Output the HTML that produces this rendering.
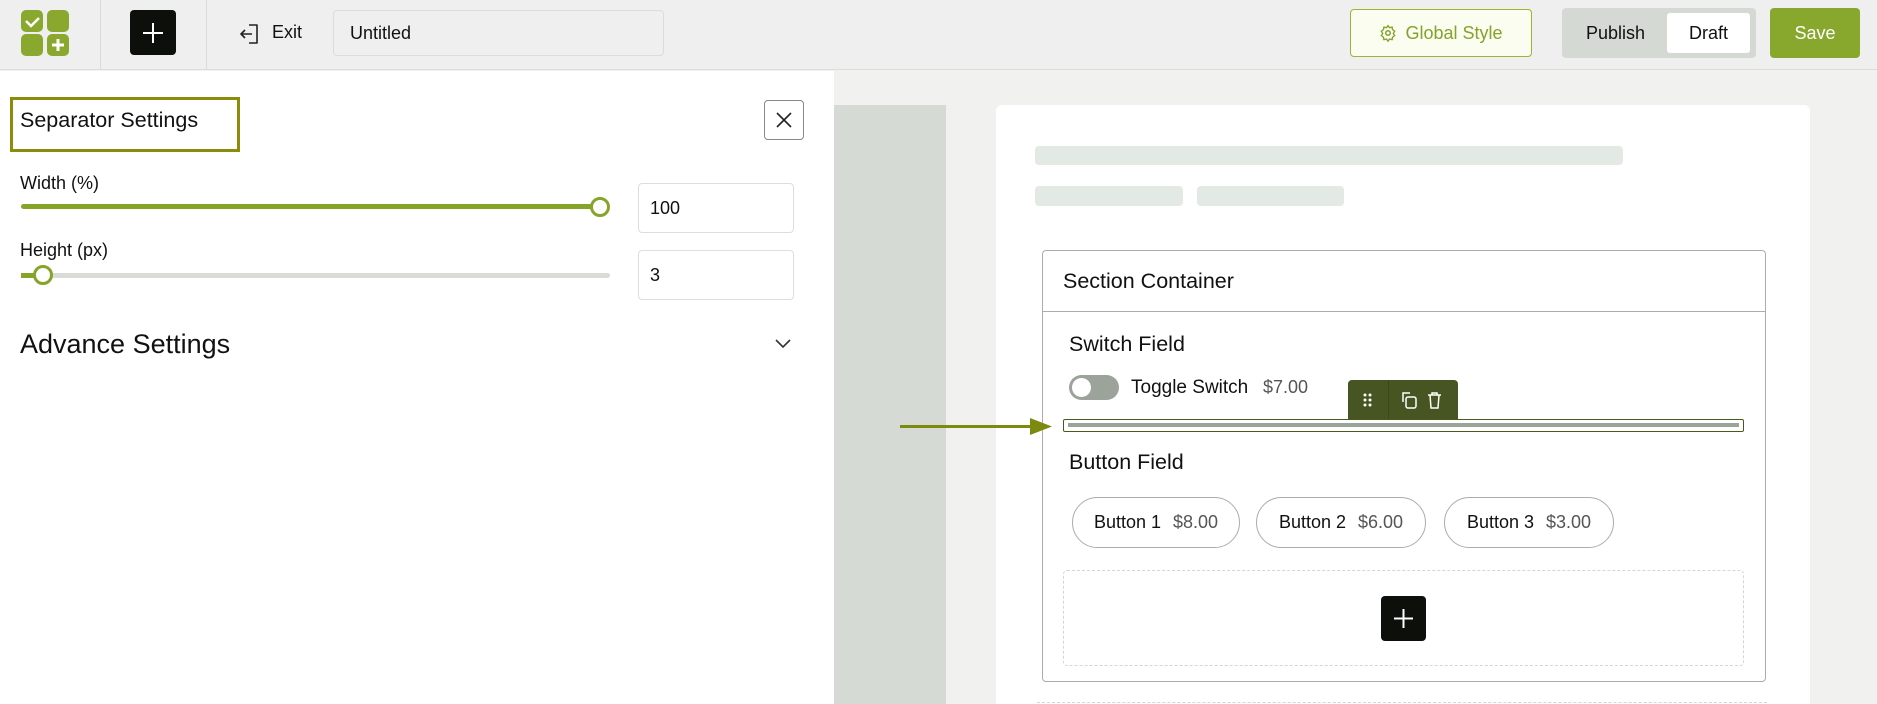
<!DOCTYPE html>
<html><head><meta charset="utf-8"><style>
*{box-sizing:border-box;margin:0;padding:0}
html{width:1877px;height:704px;overflow:hidden}
body{width:1877px;height:704px;overflow:hidden;font-family:"Liberation Sans",sans-serif;color:#111;background:#f1f2f0;position:relative}
.a{position:absolute}
.top{left:0;top:0;width:1877px;height:70px;background:#efefef;border-bottom:1px solid #dcdcdc}
.sq{width:22px;height:22px;background:#8aa72e;border-radius:5px}
.vd{top:0;width:1px;height:70px;background:#dadada}
.btntxt{font-size:18px}
.pill{border:1px solid #a9aea8;border-radius:26px;height:51px;top:497px;display:flex;align-items:center;justify-content:center;font-size:18px;gap:12px;background:#fff}
.pill span{color:#555}
.inp{border:1px solid #ddd;border-radius:4px;background:#fff;font-size:18px;padding-left:11px;display:flex;align-items:center}
</style></head><body>
<div class="a top"></div>
<div class="a sq" style="left:21px;top:10px"></div>
<div class="a sq" style="left:47px;top:10px"></div>
<div class="a sq" style="left:21px;top:34px"></div>
<div class="a sq" style="left:47px;top:34px"></div>
<svg class="a" style="left:21px;top:10px" width="48" height="48"><path d="M5 11l5 5 8-8" stroke="#fff" stroke-width="2.5" fill="none"/><path d="M37 29v12M31 35h12" stroke="#fff" stroke-width="3"/></svg>
<div class="a vd" style="left:100px"></div>
<div class="a vd" style="left:206px"></div>
<div class="a" style="left:130px;top:10px;width:46px;height:45px;background:#0d0f0a;border-radius:4px"></div>
<svg class="a" style="left:130px;top:10px" width="46" height="45"><path d="M23 13v20M13 23h20" stroke="#fff" stroke-width="2"/></svg>
<svg class="a" style="left:238px;top:22px" width="24" height="24"><path d="M11 3h8v18h-8M14 12H3M7 8l-4 4 4 4" stroke="#222" stroke-width="1.6" fill="none" stroke-linejoin="round"/></svg>
<div class="a btntxt" style="left:272px;top:22px">Exit</div>
<div class="a inp" style="left:333px;top:10px;width:331px;height:46px;background:#efefef;border-color:#dcdcdc;padding-left:16px">Untitled</div>
<div class="a" style="left:1350px;top:9px;width:182px;height:48px;border:1px solid #9ab531;border-radius:4px;background:#fafdf0;color:#86a22a;font-size:18px;display:flex;align-items:center;justify-content:center;gap:8px">
<svg width="18" height="18" viewBox="0 0 24 24"><circle cx="12" cy="12" r="3" fill="none" stroke="#86a22a" stroke-width="2"/><path d="M12 2l2 3 3.5-1 .5 3.5 3 2-2 3 2 3-3 2-.5 3.5-3.5-1-2 3-2-3-3.5 1-.5-3.5-3-2 2-3-2-3 3-2 .5-3.5 3.5 1z" fill="none" stroke="#86a22a" stroke-width="1.8" stroke-linejoin="round"/></svg>Global Style</div>
<div class="a" style="left:1562px;top:8px;width:194px;height:50px;background:#d5d9d4;border-radius:4px"></div>
<div class="a btntxt" style="left:1586px;top:23px">Publish</div>
<div class="a" style="left:1667px;top:13px;width:83px;height:40px;background:#fff;border-radius:3px;font-size:18px;display:flex;align-items:center;justify-content:center">Draft</div>
<div class="a" style="left:1770px;top:8px;width:90px;height:50px;background:#88a72d;border-radius:4px;color:#fff;font-size:18px;display:flex;align-items:center;justify-content:center">Save</div>

<div class="a" style="left:0;top:71px;width:834px;height:633px;background:#fff"></div>
<div class="a" style="left:10px;top:97px;width:230px;height:55px;border:3px solid #8a8c0a"></div>
<div class="a" style="left:20px;top:108px;font-size:21.5px">Separator Settings</div>
<div class="a" style="left:764px;top:100px;width:40px;height:40px;border:1px solid #888;border-radius:4px"></div>
<svg class="a" style="left:764px;top:100px" width="40" height="40"><path d="M13 13l14 14M27 13L13 27" stroke="#222" stroke-width="1.6"/></svg>
<div class="a" style="left:20px;top:173px;font-size:18px">Width (%)</div>
<div class="a" style="left:21px;top:204px;width:580px;height:5px;border-radius:3px;background:#86a42a"></div>
<div class="a" style="left:590px;top:197px;width:20px;height:20px;border-radius:50%;border:3px solid #86a42a;background:#fff"></div>
<div class="a inp" style="left:638px;top:183px;width:156px;height:50px">100</div>
<div class="a" style="left:20px;top:240px;font-size:18px">Height (px)</div>
<div class="a" style="left:21px;top:273px;width:589px;height:5px;border-radius:3px;background:#d8dbd6"></div>
<div class="a" style="left:21px;top:273px;width:20px;height:5px;background:#86a42a"></div>
<div class="a" style="left:33px;top:265px;width:20px;height:20px;border-radius:50%;border:3px solid #86a42a;background:#fff"></div>
<div class="a inp" style="left:638px;top:250px;width:156px;height:50px">3</div>
<div class="a" style="left:20px;top:329px;font-size:27px">Advance Settings</div>
<svg class="a" style="left:774px;top:338px" width="18" height="12"><path d="M2 2l7 7 7-7" stroke="#333" stroke-width="1.6" fill="none"/></svg>

<div class="a" style="left:834px;top:105px;width:112px;height:599px;background:#d5dad5"></div>
<div class="a" style="left:996px;top:105px;width:814px;height:599px;background:#fff;border-radius:6px 6px 0 0"></div>
<div class="a" style="left:1035px;top:146px;width:588px;height:19px;background:#e3e9e3;border-radius:4px"></div>
<div class="a" style="left:1035px;top:186px;width:148px;height:20px;background:#e3e9e3;border-radius:4px"></div>
<div class="a" style="left:1197px;top:186px;width:147px;height:20px;background:#e3e9e3;border-radius:4px"></div>
<div class="a" style="left:1042px;top:250px;width:724px;height:432px;border:1px solid #a9aea8;border-radius:4px"></div>
<div class="a" style="left:1043px;top:311px;width:722px;height:1px;background:#a9aea8"></div>
<div class="a" style="left:1063px;top:269px;font-size:21.5px">Section Container</div>
<div class="a" style="left:1069px;top:332px;font-size:21.5px">Switch Field</div>
<div class="a" style="left:1069px;top:375px;width:50px;height:25px;border-radius:13px;background:#9ba39b"></div>
<div class="a" style="left:1072px;top:378px;width:19px;height:19px;border-radius:50%;background:#fff"></div>
<div class="a" style="left:1131px;top:377px;font-size:19px">Toggle Switch</div>
<div class="a" style="left:1263px;top:377px;font-size:18px;color:#555">$7.00</div>
<div class="a" style="left:1348px;top:380px;width:110px;height:40px;background:#465521;border-radius:4px 4px 0 0"></div>
<div class="a" style="left:1388px;top:380px;width:1px;height:40px;background:#3a4719"></div>
<svg class="a" style="left:1348px;top:380px" width="110" height="40"><g fill="#fff"><circle cx="17" cy="15" r="1.5"/><circle cx="22" cy="15" r="1.5"/><circle cx="17" cy="20" r="1.5"/><circle cx="22" cy="20" r="1.5"/><circle cx="17" cy="25" r="1.5"/><circle cx="22" cy="25" r="1.5"/></g><g stroke="#fff" stroke-width="1.5" fill="none"><path d="M55 22v-9h7"/><rect x="58" y="17" width="10" height="11" rx="2"/><path d="M80 15h13M84 15v-2h5v2M82 15l1 13h7l1-13"/></g></svg>
<div class="a" style="left:1063px;top:419px;width:681px;height:13px;border:1.5px solid #4a5a1f;border-radius:2px;background:#fff"></div>
<div class="a" style="left:1068px;top:423px;width:671px;height:4px;background:#9aa59a"></div>
<div class="a" style="left:900px;top:425px;width:135px;height:3px;background:#7d8a10"></div>
<svg class="a" style="left:1030px;top:418px" width="22" height="17"><path d="M0 0L22 8.5 0 17z" fill="#7d8a10"/></svg>
<div class="a" style="left:1069px;top:450px;font-size:21.5px">Button Field</div>
<div class="a pill" style="left:1072px;width:168px">Button 1 <span>$8.00</span></div>
<div class="a pill" style="left:1256px;width:170px">Button 2 <span>$6.00</span></div>
<div class="a pill" style="left:1444px;width:170px">Button 3 <span>$3.00</span></div>
<div class="a" style="left:1063px;top:570px;width:681px;height:96px;border:1px dashed #d5d5d5;border-radius:4px"></div>
<div class="a" style="left:1381px;top:596px;width:45px;height:45px;background:#0d0f0a;border-radius:4px"></div>
<svg class="a" style="left:1381px;top:596px" width="45" height="45"><path d="M22.5 13v19M13 22.5h19" stroke="#fff" stroke-width="2"/></svg>
<div class="a" style="left:1037px;top:702px;width:730px;height:1px;border-top:1px dashed #d5d5d5"></div>
</body></html>
